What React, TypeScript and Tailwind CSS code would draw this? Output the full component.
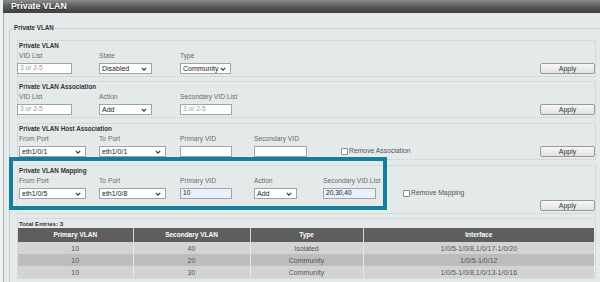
import React from 'react';

const FONT = "font-['Liberation_Sans',Arial,sans-serif]";

function Chevron() {
  return (
    <svg width="6" height="4" viewBox="0 0 6 4" className="shrink-0">
      <path d="M0.8 0.8 L3 3.1 L5.2 0.8" fill="none" stroke="#333" strokeWidth="1.1" />
    </svg>
  );
}

function Select({ value, w }: { value: string; w: string }) {
  return (
    <div
      className={`h-[11px] ${w} bg-white border border-[#a3a3a3] flex items-center justify-between pl-[2px] pr-[4px] text-[7px] leading-none text-[#222]`}
    >
      <span className="whitespace-nowrap">{value}</span>
      <Chevron />
    </div>
  );
}

function TextInput({ value, placeholder, w, filled }: { value?: string; placeholder?: string; w: string; filled?: boolean }) {
  return (
    <div
      className={`h-[11px] ${w} border border-[#a3a3a3] flex items-center pl-[2px] text-[6.6px] leading-none ${
        filled ? 'bg-[#e8f0fe] text-[#222]' : 'bg-white text-[#9a9a9a]'
      }`}
    >
      {value ?? placeholder}
    </div>
  );
}

function Field({ label, w, children }: { label: string; w: string; children: React.ReactNode }) {
  return (
    <div className={`flex flex-col ${w} shrink-0`}>
      <div className="h-[10px] leading-[10px] mb-[2px] text-[6.7px] text-[#6b6b6b] whitespace-nowrap">{label}</div>
      {children}
    </div>
  );
}

function Apply() {
  return (
    <button className="h-[11px] w-[55px] ml-auto border border-[#9a9a9a] rounded-[2px] bg-gradient-to-b from-[#f7f7f7] to-[#e2e2e2] text-[7px] leading-none text-[#333] flex items-center justify-center">
      Apply
    </button>
  );
}

function Check({ label, ml }: { label: string; ml: string }) {
  return (
    <div className={`flex items-center h-[11px] ${ml} shrink-0`}>
      <div className="w-[7px] h-[7px] bg-white border border-[#8a8a8a] rounded-[1px]" />
      <span className="ml-[1px] text-[6.8px] text-[#555] whitespace-nowrap">{label}</span>
    </div>
  );
}

function Header({ children }: { children: React.ReactNode }) {
  return <div className="h-[10px] leading-[10px] text-[6.3px] font-bold text-[#333] whitespace-nowrap">{children}</div>;
}

const rows = [
  { p: '10', s: '40', t: 'Isolated', i: '1/0/5-1/0/8,1/0/17-1/0/20', bg: 'bg-[#d3d3d3]' },
  { p: '10', s: '20', t: 'Community', i: '1/0/5-1/0/12', bg: 'bg-[#bdbdbd]' },
  { p: '10', s: '30', t: 'Community', i: '1/0/5-1/0/8,1/0/13-1/0/16', bg: 'bg-[#d3d3d3]' },
];

export default function App() {
  return (
    <div className={`w-[600px] h-[282px] overflow-hidden flex bg-[#eef1f1] ${FONT}`}>
      <div className="w-[3px] shrink-0" />
      <div className="flex-1 flex flex-col">
        {/* title bar */}
        <div className="h-[3px] bg-[#c9d1d4] -ml-[3px]" />
        <div className="h-[13px] shrink-0 bg-gradient-to-b from-[#8c8c8c] via-[#5a5a5a] to-[#3f3f3f] pl-[8px] flex items-center">
          <span className="text-[8.8px] font-bold text-white leading-none [text-shadow:0_1px_1px_#222]">Private VLAN</span>
        </div>

        <div className="flex-1 bg-[#e3eae9] border-l border-[#a9b2b4] pl-[5px]">
          <fieldset className="mt-[10px] w-[640px] h-[300px] border border-[#c6cece] rounded-[4px] pl-[7px] pt-[7px]">
            <legend className="-ml-[4px] px-[1px] h-[10px] leading-[10px] text-[6.3px] font-bold text-[#333]">
              Private VLAN
            </legend>

            {/* Private VLAN */}
            <div className="w-[579px] border border-dotted border-[#c3cbcb] pl-px pb-[2px]">
              <Header>Private VLAN</Header>
              <div className="flex items-end">
                <Field label="VID List" w="w-[80px]">
                  <div className="-ml-[2px]">
                    <TextInput placeholder="3 or 2-5" w="w-[55px]" />
                  </div>
                </Field>
                <Field label="State" w="w-[81px]">
                  <Select value="Disabled" w="w-[53px]" />
                </Field>
                <Field label="Type" w="w-[74px]">
                  <Select value="Community" w="w-[51px]" />
                </Field>
                <Apply />
              </div>
            </div>

            {/* Association */}
            <div className="w-[579px] mt-[4px] border border-dotted border-[#c3cbcb] pl-px pb-[2px]">
              <Header>Private VLAN Association</Header>
              <div className="flex items-end">
                <Field label="VID List" w="w-[80px]">
                  <div className="-ml-[2px]">
                    <TextInput placeholder="3 or 2-5" w="w-[55px]" />
                  </div>
                </Field>
                <Field label="Action" w="w-[81px]">
                  <Select value="Add" w="w-[53px]" />
                </Field>
                <Field label="Secondary VID List" w="w-[74px]">
                  <TextInput placeholder="3 or 2-5" w="w-[52px]" />
                </Field>
                <Apply />
              </div>
            </div>

            {/* Host Association */}
            <div className="w-[579px] mt-[5px] border border-dotted border-[#c3cbcb] pl-px pb-[2px]">
              <Header>Private VLAN Host Association</Header>
              <div className="flex items-end">
                <Field label="From Port" w="w-[80px]">
                  <Select value="eth1/0/1" w="w-[67px]" />
                </Field>
                <Field label="To Port" w="w-[81px]">
                  <Select value="eth1/0/1" w="w-[67px]" />
                </Field>
                <Field label="Primary VID" w="w-[74px]">
                  <TextInput value="" w="w-[52px]" />
                </Field>
                <Field label="Secondary VID" w="w-[69px]">
                  <TextInput value="" w="w-[53px]" />
                </Field>
                <Check label="Remove Association" ml="ml-[18px]" />
                <Apply />
              </div>
            </div>

            {/* Mapping */}
            <div className="relative w-[579px] mt-[5px] border border-dotted border-[#c3cbcb] pl-px pb-[2px]">
              <Header>Private VLAN Mapping</Header>
              <div className="flex items-end">
                <Field label="From Port" w="w-[80px]">
                  <Select value="eth1/0/5" w="w-[67px]" />
                </Field>
                <Field label="To Port" w="w-[81px]">
                  <Select value="eth1/0/8" w="w-[67px]" />
                </Field>
                <Field label="Primary VID" w="w-[74px]">
                  <TextInput value="10" w="w-[52px]" filled />
                </Field>
                <Field label="Action" w="w-[69px]">
                  <Select value="Add" w="w-[43px]" />
                </Field>
                <Field label="Secondary VID List" w="w-[80px]">
                  <TextInput value="20,30,40" w="w-[53px]" filled />
                </Field>
                <Check label="Remove Mapping" ml="ml-0" />
              </div>
              <div className="flex mt-[1px]">
                <Apply />
              </div>
              {/* highlight frame */}
              <div className="absolute -left-[9px] -top-[9px] w-[378px] h-[53px] border-4 border-[#12809d] pointer-events-none" />
            </div>

            {/* Table */}
            <div className="w-[579px] mt-[4px] border border-dotted border-[#c3cbcb]">
              <div className="h-[9px] leading-[9px] pl-[1px] text-[6.2px] font-bold text-[#333]">Total Entries: 3</div>
              <table className="w-[576px] border-collapse table-fixed">
                <colgroup>
                  <col className="w-[115px]" />
                  <col className="w-[117px]" />
                  <col className="w-[113px]" />
                  <col className="w-[231px]" />
                </colgroup>
                <thead>
                  <tr className="h-[14px] bg-[#5e5e5e] text-white text-[6.5px] font-bold">
                    <th className="border-r border-[#d8d8d8] p-0 leading-none">Primary VLAN</th>
                    <th className="border-r border-[#d8d8d8] p-0 leading-none">Secondary VLAN</th>
                    <th className="border-r border-[#d8d8d8] p-0 leading-none">Type</th>
                    <th className="p-0 leading-none">Interface</th>
                  </tr>
                </thead>
                <tbody>
                  {rows.map((r, i) => (
                    <tr key={i} className={`h-[12px] ${r.bg} text-[7px] text-[#555] text-center`}>
                      <td className="border-r border-[#e6e6e6] p-0 leading-none">{r.p}</td>
                      <td className="border-r border-[#e6e6e6] p-0 leading-none">{r.s}</td>
                      <td className="border-r border-[#e6e6e6] p-0 leading-none">{r.t}</td>
                      <td className="p-0 leading-none">{r.i}</td>
                    </tr>
                  ))}
                </tbody>
              </table>
            </div>
          </fieldset>
        </div>
      </div>
    </div>
  );
}
